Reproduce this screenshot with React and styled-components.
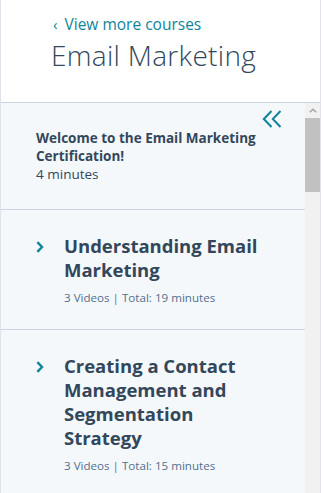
import styled, { createGlobalStyle } from 'styled-components';

const GlobalStyle = createGlobalStyle`
	html, body {
		margin: 0;
		padding: 0;
		height: 100%;
		background: #fff;
	}
	#root {
		height: 100%;
	}
	* {
		box-sizing: border-box;
	}
`

const Sidebar = styled.div`
	width: 321px;
	height: 100vh;
	display: flex;
	flex-direction: column;
	font-family: "Open Sans", "Noto Sans", sans-serif;
	border-left: 1px solid #dfe3eb;
	border-right: 1px solid #dfe3eb;
	color: #33475b;
`
const Header = styled.div`
	height: 103px;
	min-height: 103px;
	padding: 12px 0 0 50px;
	border-bottom: 1px solid #cbd6e2;
	background: #fff;
`
const BackLink = styled.a`
	display: flex;
	align-items: center;
	gap: 7px;
	font-size: 15.5px;
	line-height: 24px;
	color: #0e849b;
	text-decoration: none;
`
const BackArrow = styled.span`
	font-size: 15px;
	margin-left: 2px;
`
const Title = styled.h1`
	margin: 1px 0 0;
	font-size: 28px;
	line-height: 36px;
	font-weight: 300;
	letter-spacing: 0.3px;
	color: #33475b;
`
const Body = styled.div`
	flex: 1;
	min-height: 0;
	display: flex;
`
const ListContainer = styled.div`
	position: relative;
	flex: 1;
	overflow: hidden;
	background: #f5f8fa;
`
const ScrollTrack = styled.div`
	width: 15px;
	display: flex;
	flex-direction: column;
	background: #f1f1f1;
`
const ScrollUp = styled.div`
	height: 15px;
	display: flex;
	align-items: center;
	justify-content: center;
	color: #a3a3a3;
`
const ScrollThumb = styled.div`
	height: 74px;
	background: #c1c1c1;
`
const CollapseButton = styled.button`
	position: absolute;
	top: 5px;
	right: 22px;
	width: 22px;
	height: 22px;
	padding: 0;
	border: none;
	background: none;
	color: #0e849b;
	display: flex;
	align-items: center;
	justify-content: center;
	cursor: pointer;
`
const Lesson = styled.div`
	display: flex;
	gap: 20px;
	padding: ${p => p.$intro ? '26px 20px 26px 35px' : '24px 20px 23px 35px'};
	border-bottom: 1px solid #cbd6e2;
`
const Chevron = styled.span`
	width: 8px;
	margin-top: 2px;
	color: #0e849b;
	flex-shrink: 0;
`
const LessonBody = styled.div`
	display: flex;
	flex-direction: column;
`
const IntroTitle = styled.div`
	font-size: 13.5px;
	line-height: 18px;
	font-weight: 700;
	color: #33475b;
	padding-right: 25px;
`
const IntroTime = styled.div`
	font-size: 13.5px;
	line-height: 18px;
	color: #33475b;
`
const LessonTitle = styled.div`
	font-size: 18.5px;
	line-height: 24px;
	font-weight: 700;
	color: #33475b;
	padding-right: 15px;
`
const LessonMeta = styled.div`
	margin-top: 8px;
	font-size: 11.6px;
	line-height: 16px;
	color: #516f90;
`

const lessons = [
	{ title: 'Understanding Email Marketing', videos: 3, minutes: 19 },
	{ title: 'Creating a Contact Management and Segmentation Strategy', videos: 3, minutes: 15 },
]

const ChevronIcon = () => (
	<svg width="8" height="12" viewBox="0 0 8 12">
		<path d="M1.4 1.2 L6 6 L1.4 10.8" fill="none" stroke="currentColor" strokeWidth="2.4" />
	</svg>
)

const DoubleChevronIcon = () => (
	<svg width="20" height="18" viewBox="0 0 20 18">
		<path d="M9.5 1 L1.8 9 L9.5 17 M18.5 1 L10.8 9 L18.5 17" fill="none" stroke="currentColor" strokeWidth="2" />
	</svg>
)

const CaretUpIcon = () => (
	<svg width="8" height="5" viewBox="0 0 8 5">
		<path d="M0.8 4.3 L4 1.2 L7.2 4.3" fill="none" stroke="currentColor" strokeWidth="1.4" />
	</svg>
)

export default function App() {
	return (
		<>
			<GlobalStyle />
			<Sidebar>
				<Header>
					<BackLink href="#">
						<BackArrow>‹</BackArrow>
						View more courses
					</BackLink>
					<Title>Email Marketing</Title>
				</Header>
				<Body>
					<ListContainer>
						<CollapseButton aria-label="Collapse">
							<DoubleChevronIcon />
						</CollapseButton>
						<Lesson $intro>
							<LessonBody>
								<IntroTitle>Welcome to the Email Marketing Certification!</IntroTitle>
								<IntroTime>4 minutes</IntroTime>
							</LessonBody>
						</Lesson>
						{lessons.map(item => (
							<Lesson key={item.title}>
								<Chevron><ChevronIcon /></Chevron>
								<LessonBody>
									<LessonTitle>{item.title}</LessonTitle>
									<LessonMeta>{item.videos} Videos | Total: {item.minutes} minutes</LessonMeta>
								</LessonBody>
							</Lesson>
						))}
					</ListContainer>
					<ScrollTrack>
						<ScrollUp><CaretUpIcon /></ScrollUp>
						<ScrollThumb />
					</ScrollTrack>
				</Body>
			</Sidebar>
		</>
	);
}
